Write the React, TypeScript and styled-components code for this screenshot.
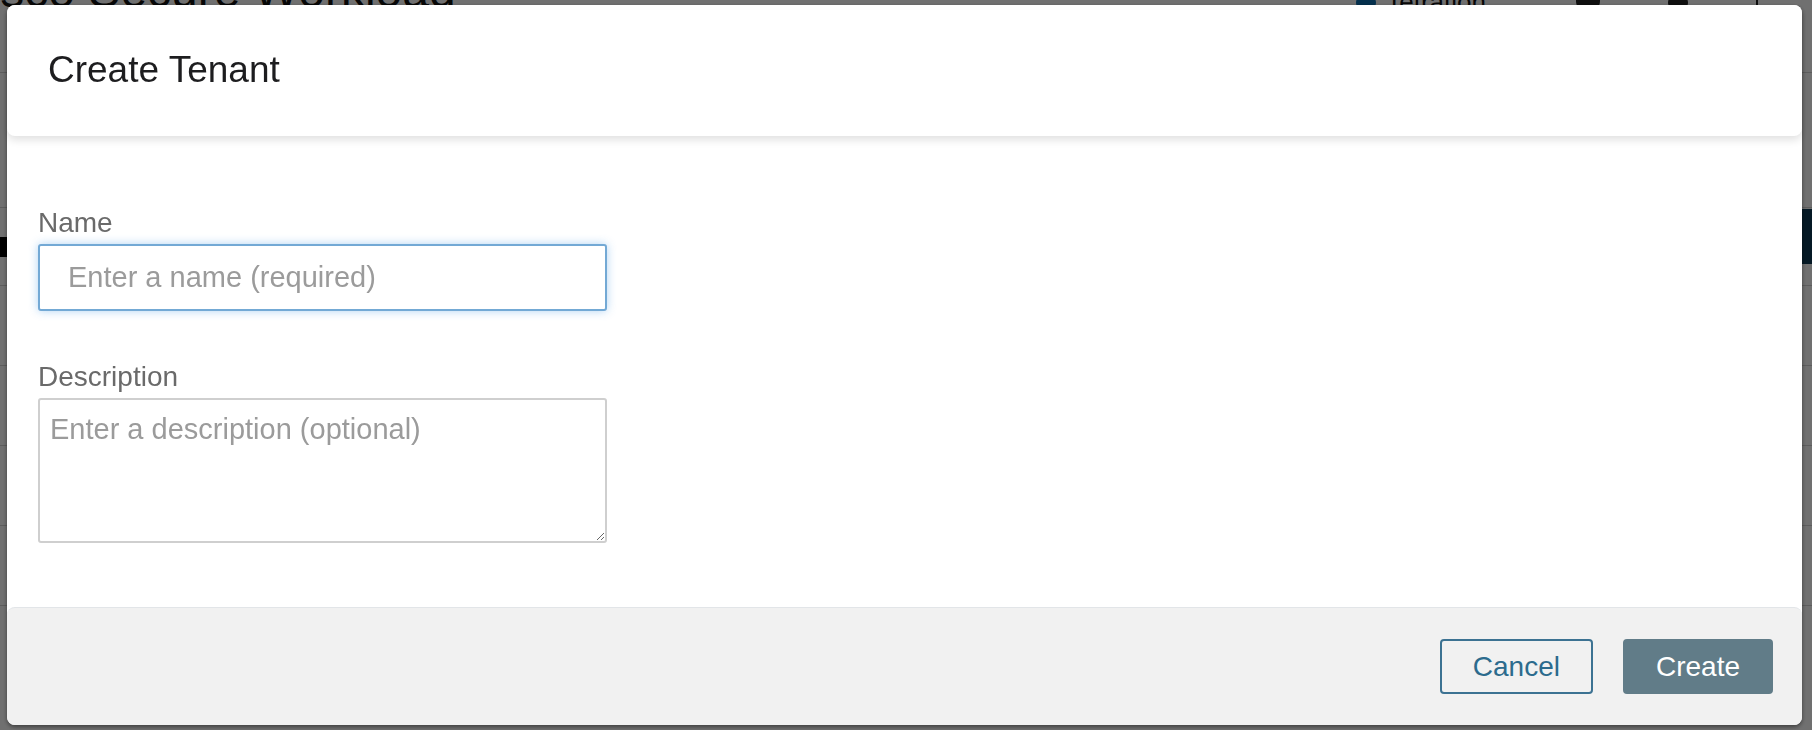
import React from 'react';
import styled, { createGlobalStyle } from 'styled-components';

const GlobalStyle = createGlobalStyle`
  html, body {
    margin: 0;
    padding: 0;
    height: 100%;
    overflow: hidden;
  }
  body {
    font-family: "Liberation Sans", Arial, sans-serif;
    background: #ffffff;
  }
`;

/* ---------- page behind the dialog ---------- */

const Page = styled.div`
  width: 100%;
  height: 730px;
  background: #ffffff;
  overflow: hidden;
`;

const BrandBar = styled.header`
  height: 15px;
  display: flex;
  align-items: flex-end;
  justify-content: space-between;
  padding-right: 54px;
`;

const BrandTitle = styled.h1`
  margin: 0;
  font-size: 48px;
  line-height: 1;
  font-weight: 400;
  color: #111;
  text-indent: -45px;
  white-space: nowrap;
`;

const BrandTools = styled.div`
  display: flex;
  align-items: flex-end;
`;

const TenantSwitch = styled.div`
  display: flex;
  align-items: flex-end;
  gap: 10px;
  font-size: 26px;
  line-height: 1;
  color: #111;
  margin-right: 90px;
`;

const Dot = styled.span<{ color: string; size?: number }>`
  width: ${(p) => p.size ?? 20}px;
  height: ${(p) => p.size ?? 20}px;
  border-radius: 50%;
  background: ${(p) => p.color};
  margin-bottom: 2px;
`;

const ToolSlot = styled.span`
  display: flex;
  align-items: flex-end;
  margin-right: 68px;
`;

const Divider = styled.span`
  width: 2px;
  height: 20px;
  background: #222;
`;

const SubNav = styled.div`
  height: 57px;
  border-bottom: 1px solid #d4d4d4;
`;

const Filters = styled.div`
  height: 134px;
  border-bottom: 1px solid #d4d4d4;
`;

const Toolbar = styled.div`
  height: 77px;
  display: flex;
  align-items: center;
  justify-content: space-between;
  border-bottom: 1px solid #d4d4d4;
`;

const InfoChip = styled.span`
  width: 14px;
  height: 20px;
  background: #000;
  color: #fff;
  font-size: 16px;
  line-height: 20px;
  text-align: right;
`;

const NavyButton = styled.span`
  width: 40px;
  height: 55px;
  background: #0c3a55;
  margin-bottom: 20px;
`;

const Row = styled.div`
  height: 79px;
  border-bottom: 1px solid #d4d4d4;
`;

/* ---------- dialog ---------- */

const Overlay = styled.div`
  position: fixed;
  inset: 0;
  background: rgba(0, 0, 0, 0.56);
  display: flex;
  box-sizing: border-box;
  padding: 5px 10px 5px 7px;
`;

const Dialog = styled.div`
  flex: 1;
  display: flex;
  flex-direction: column;
  background: #ffffff;
  border-radius: 8px;
  box-shadow: 0 2px 4px rgba(0, 0, 0, 0.45);
`;

const DialogHeader = styled.div`
  height: 131px;
  flex-shrink: 0;
  display: flex;
  align-items: center;
  padding-left: 41px;
  background: #ffffff;
  border-radius: 8px;
  box-shadow: 0 4px 9px rgba(0, 0, 0, 0.12);
  position: relative;
  z-index: 1;
`;

const DialogTitle = styled.h2`
  margin: 0;
  font-size: 37px;
  line-height: 1.2;
  font-weight: 400;
  color: #1d1d1f;
`;

const DialogBody = styled.div`
  flex: 1;
  padding: 71px 31px 0;
`;

const FormGroup = styled.div`
  display: flex;
  flex-direction: column;
  width: 569px;

  & + & {
    margin-top: 50px;
  }
`;

const Label = styled.label`
  font-size: 28px;
  line-height: 32px;
  color: #6a6a6a;
  margin-bottom: 5px;
`;

const fieldText = `
  box-sizing: border-box;
  width: 100%;
  font-family: "Liberation Sans", Arial, sans-serif;
  font-size: 29px;
  color: #333;
  background: #fff;
  border-radius: 3px;
  outline: none;
  &::placeholder {
    color: #9b9b9b;
  }
`;

const TextInput = styled.input`
  ${fieldText}
  height: 67px;
  padding: 0 28px;
  border: 2px solid #73a9d5;
  box-shadow: 0 0 10px rgba(82, 160, 230, 0.45);
`;

const TextArea = styled.textarea`
  ${fieldText}
  height: 145px;
  padding: 13px 10px;
  line-height: 33px;
  border: 2px solid #cfcfcf;
  resize: vertical;
`;

const DialogFooter = styled.div`
  height: 118px;
  flex-shrink: 0;
  box-sizing: border-box;
  display: flex;
  align-items: center;
  justify-content: flex-end;
  gap: 30px;
  padding-right: 29px;
  background: #f1f1f1;
  border-top: 1px solid #e2e5e8;
  border-radius: 8px;
`;

const Button = styled.button<{ primary?: boolean }>`
  height: 55px;
  padding: 0 31px;
  border-radius: 4px;
  font-family: "Liberation Sans", Arial, sans-serif;
  font-size: 28px;
  cursor: pointer;
  border: 2px solid ${(p) => (p.primary ? '#617c88' : '#3c7292')};
  background: ${(p) => (p.primary ? '#617c88' : 'transparent')};
  color: ${(p) => (p.primary ? '#ffffff' : '#2c6b8d')};
`;

const App: React.FC = () => {
  return (
    <>
      <GlobalStyle />
      <Page>
        <BrandBar>
          <BrandTitle>Cisco Secure Workload</BrandTitle>
          <BrandTools>
            <TenantSwitch>
              <Dot color="#0a6fb0" />
              Tetration
            </TenantSwitch>
            <ToolSlot>
              <Dot color="#222" size={24} />
            </ToolSlot>
            <ToolSlot>
              <Dot color="#222" />
            </ToolSlot>
            <Divider />
          </BrandTools>
        </BrandBar>
        <SubNav />
        <Filters />
        <Toolbar>
          <InfoChip>i</InfoChip>
          <NavyButton />
        </Toolbar>
        <Row />
        <Row />
        <Row />
        <Row />
      </Page>

      <Overlay>
        <Dialog role="dialog" aria-labelledby="create-tenant-title">
          <DialogHeader>
            <DialogTitle id="create-tenant-title">Create Tenant</DialogTitle>
          </DialogHeader>

          <DialogBody>
            <FormGroup>
              <Label htmlFor="tenant-name">Name</Label>
              <TextInput id="tenant-name" placeholder="Enter a name (required)" />
            </FormGroup>
            <FormGroup>
              <Label htmlFor="tenant-description">Description</Label>
              <TextArea id="tenant-description" placeholder="Enter a description (optional)" />
            </FormGroup>
          </DialogBody>

          <DialogFooter>
            <Button>Cancel</Button>
            <Button primary>Create</Button>
          </DialogFooter>
        </Dialog>
      </Overlay>
    </>
  );
};

export default App;
